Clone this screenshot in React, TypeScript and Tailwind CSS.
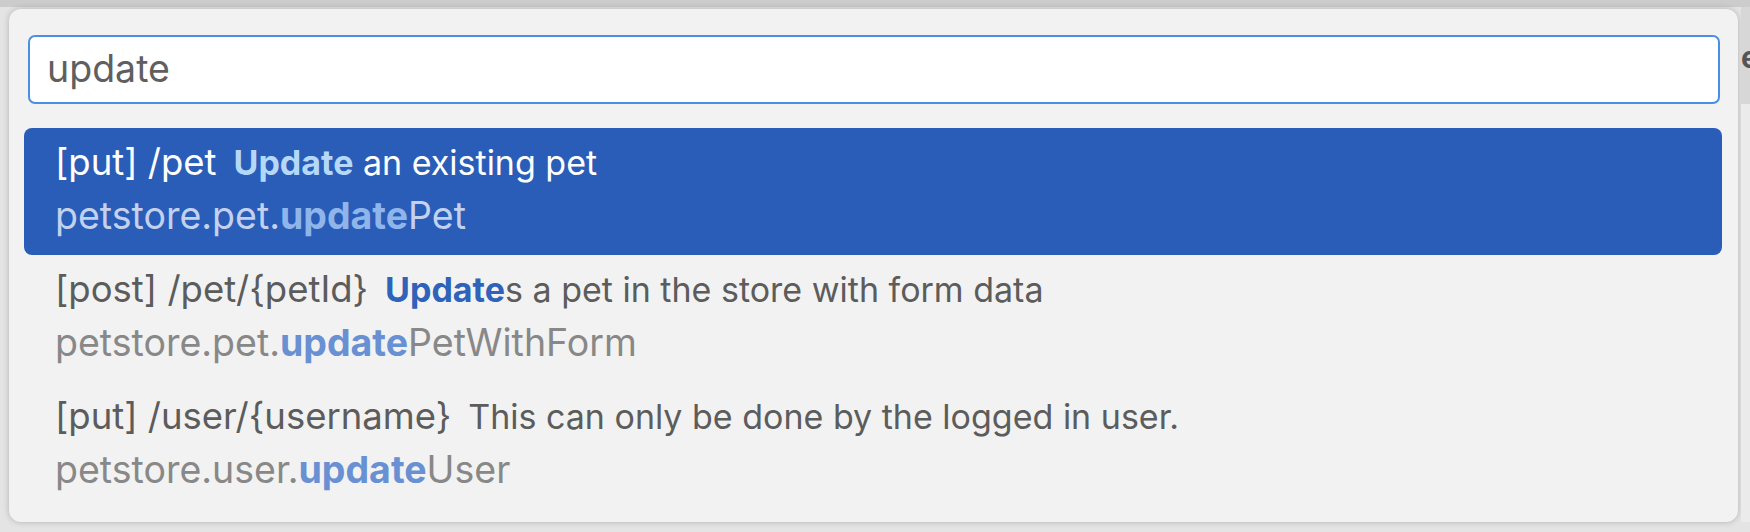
import React from "react";

type Item = {
  method: string;
  path: string;
  descHit: string;
  descRest: string;
  opPrefix: string;
  opHit: string;
  opRest: string;
  selected?: boolean;
};

const items: Item[] = [
  {
    method: "put",
    path: "/pet",
    descHit: "Update",
    descRest: " an existing pet",
    opPrefix: "petstore.pet.",
    opHit: "update",
    opRest: "Pet",
    selected: true,
  },
  {
    method: "post",
    path: "/pet/{petId}",
    descHit: "Update",
    descRest: "s a pet in the store with form data",
    opPrefix: "petstore.pet.",
    opHit: "update",
    opRest: "PetWithForm",
  },
  {
    method: "put",
    path: "/user/{username}",
    descHit: "",
    descRest: "This can only be done by the logged in user.",
    opPrefix: "petstore.user.",
    opHit: "update",
    opRest: "User",
  },
];

function Row({ item }: { item: Item }) {
  const sel = item.selected;
  return (
    <div
      className={
        sel
          ? "h-[127px] rounded-[8px] bg-[#295db8] pl-[31px] pt-[8px]"
          : "h-[127px] rounded-[8px] pl-[31px] pt-[8px]"
      }
    >
      <div className="flex items-baseline h-[53px] leading-[53px] whitespace-nowrap">
        <span className={sel ? "text-[36.5px] text-white" : "text-[36.5px] text-[#5c5c5c]"}>
          [{item.method}] {item.path}
        </span>
        <span className={sel ? "ml-[17px] text-[34px] text-white" : "ml-[17px] text-[34px] text-[#5c5c5c]"}>
          {item.descHit && (
            <span className={sel ? "font-bold text-[#b5d8f8]" : "font-bold text-[#2e63b9]"}>{item.descHit}</span>
          )}
          {item.descRest}
        </span>
      </div>
      <div
        className={
          sel
            ? "h-[53px] text-[37.5px] leading-[53px] text-[#c3d1ee] whitespace-nowrap"
            : "h-[53px] text-[37.5px] leading-[53px] text-[#888888] whitespace-nowrap"
        }
      >
        {item.opPrefix}
        <span className={sel ? "font-bold text-[#8fb5ea]" : "font-bold text-[#6890d2]"}>{item.opHit}</span>
        {item.opRest}
      </div>
    </div>
  );
}

export default function App() {
  return (
    <div className="w-[1750px] h-[532px] overflow-hidden bg-[#e4e4e4] font-['Inter','Liberation_Sans',sans-serif]">
      <div className="h-[7px] bg-[#cccccc]" />
      <div className="flex">
        <div className="shrink-0 mt-[2px] ml-[9px] w-[1729px] h-[513px] rounded-[12px] bg-[#f2f2f2] shadow-[0_0_6px_rgba(0,0,0,0.22)] pt-[26px] pl-[15px] pr-[16px]">
          <div className="ml-[4px] mr-[2px] h-[69px] rounded-[7px] border-2 border-[#4a8fe3] bg-white flex items-center pl-[17px]">
            <span className="text-[37.5px] text-[#5f5f5f]">update</span>
          </div>
          <div className="mt-[24px] flex flex-col">
            {items.map((it, i) => (
              <Row key={i} item={it} />
            ))}
          </div>
        </div>
        <div className="ml-[3px] min-w-0 flex-1 flex flex-col overflow-hidden">
          <div className="h-[97px] bg-[#d7d7d7] text-[30px] font-bold text-[#555] leading-[100px] whitespace-nowrap">e</div>
          <div className="flex-1 bg-[#ebebeb]" />
        </div>
      </div>
    </div>
  );
}
